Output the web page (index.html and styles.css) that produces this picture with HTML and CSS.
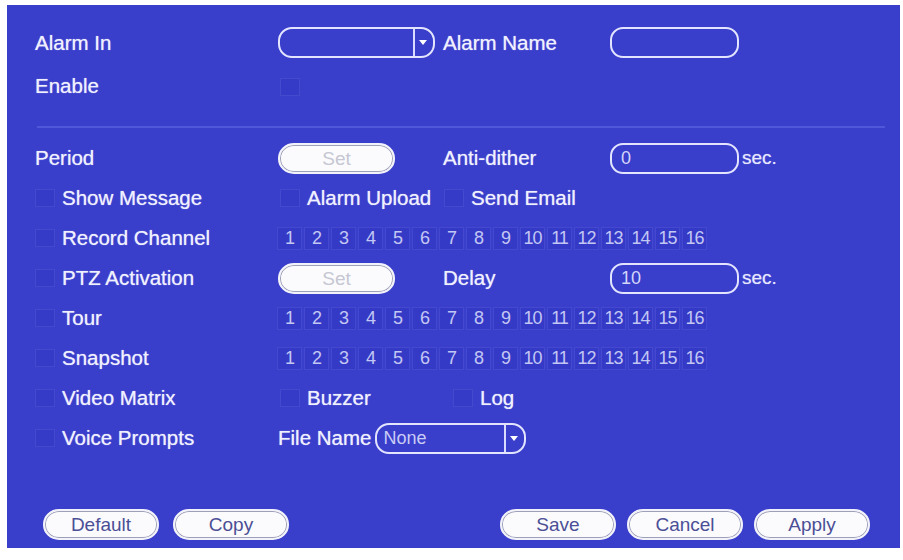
FILE: index.html
```html
<!DOCTYPE html>
<html>
<head>
<meta charset="utf-8">
<link rel="stylesheet" href="styles.css">
</head>
<body>
<div class="panel">
  <div class="form top">
    <div class="label">Alarm In</div>
    <div class="select wide"><span class="sel-val"></span><span class="sel-btn"><span class="tri"></span></span></div>
    <div class="label">Alarm Name</div>
    <div class="input"></div>

    <div class="label">Enable</div>
    <div class="cell"><span class="check c-enable"></span></div>
  </div>

  <div class="sep"></div>

  <div class="form rows">
    <div class="label">Period</div>
    <div class="cell"><span class="setbtn">Set</span></div>
    <div class="label">Anti-dither</div>
    <div class="cell"><span class="input">0</span><span class="unit">sec.</span></div>

    <div class="cell"><span class="check"></span><span class="label lbl-c">Show Message</span></div>
    <div class="cell"><span class="check c2"></span><span class="label lbl-c">Alarm Upload</span></div>
    <div class="cell span2"><span class="check c3"></span><span class="label lbl-c">Send Email</span></div>

    <div class="cell"><span class="check"></span><span class="label lbl-c">Record Channel</span></div>
    <div class="cell span3">
      <div class="chans">
        <span>1</span><span>2</span><span>3</span><span>4</span><span>5</span><span>6</span><span>7</span><span>8</span><span>9</span><span>10</span><span>11</span><span>12</span><span>13</span><span>14</span><span>15</span><span>16</span>
      </div>
    </div>

    <div class="cell"><span class="check"></span><span class="label lbl-c">PTZ Activation</span></div>
    <div class="cell"><span class="setbtn">Set</span></div>
    <div class="label">Delay</div>
    <div class="cell"><span class="input">10</span><span class="unit">sec.</span></div>

    <div class="cell"><span class="check"></span><span class="label lbl-c">Tour</span></div>
    <div class="cell span3">
      <div class="chans">
        <span>1</span><span>2</span><span>3</span><span>4</span><span>5</span><span>6</span><span>7</span><span>8</span><span>9</span><span>10</span><span>11</span><span>12</span><span>13</span><span>14</span><span>15</span><span>16</span>
      </div>
    </div>

    <div class="cell"><span class="check"></span><span class="label lbl-c">Snapshot</span></div>
    <div class="cell span3">
      <div class="chans">
        <span>1</span><span>2</span><span>3</span><span>4</span><span>5</span><span>6</span><span>7</span><span>8</span><span>9</span><span>10</span><span>11</span><span>12</span><span>13</span><span>14</span><span>15</span><span>16</span>
      </div>
    </div>

    <div class="cell"><span class="check"></span><span class="label lbl-c">Video Matrix</span></div>
    <div class="cell"><span class="check c2"></span><span class="label lbl-c">Buzzer</span></div>
    <div class="cell span2"><span class="check c-log"></span><span class="label lbl-c">Log</span></div>

    <div class="cell"><span class="check"></span><span class="label lbl-c">Voice Prompts</span></div>
    <div class="cell span3"><span class="label">File Name</span><div class="select file"><span class="sel-val">None</span><span class="sel-btn"><span class="tri"></span></span></div></div>
  </div>

  <div class="footer">
    <div class="btns">
      <span class="btn">Default</span>
      <span class="btn">Copy</span>
    </div>
    <div class="btns right">
      <span class="btn">Save</span>
      <span class="btn">Cancel</span>
      <span class="btn">Apply</span>
    </div>
  </div>
</div>
</body>
</html>
```

FILE: styles.css
```css
html, body {
  margin: 0;
  padding: 0;
  background: #ffffff;
}

body {
  font-family: "Liberation Sans", Arial, sans-serif;
}

.panel {
  box-sizing: border-box;
  margin: 5px 0 0 7px;
  width: 893px;
  height: 543px;
  background: #393ecb;
  padding: 16px 30px 0 28px;
  display: flex;
  flex-direction: column;
}

.form {
  display: grid;
  grid-template-columns: 243px 165px 167px 1fr;
  align-items: center;
}

.form.top {
  grid-auto-rows: 43px;
}

.form.rows {
  grid-auto-rows: 40px;
}

.cell {
  display: flex;
  align-items: center;
  height: 100%;
}

.span2 { grid-column: span 2; }
.span3 { grid-column: span 3; }

.label {
  color: #f0f1ff;
  font-size: 20.5px;
  white-space: nowrap;
  text-shadow: 0 0 1px rgba(255,255,255,0.7);
}

.lbl-c {
  margin-left: 7px;
}

.sep {
  height: 2px;
  background: #5057d8;
  margin: 19px 0 10px 2px;
  width: 848px;
}

.check {
  box-sizing: border-box;
  width: 20px;
  height: 18px;
  border: 1px solid rgba(170, 178, 255, 0.13);
  background: rgba(45, 50, 185, 0.25);
  flex: none;
}

.c2 { margin-left: 2px; }
.c3 { margin-left: 1px; }
.c-log { margin-left: 10px; }
.c-enable { margin-left: 2px; margin-top: 2px; }

.select {
  box-sizing: border-box;
  height: 31px;
  border: 2px solid #e3e5ff;
  border-radius: 14px;
  display: flex;
  align-items: stretch;
}

.select.wide {
  width: 157px;
}

.select.file {
  width: 151px;
  margin-left: 4px;
}

.sel-val {
  flex: 1;
  border-right: 2px solid #d9dbff;
  color: #c9ccf5;
  font-size: 18px;
  padding-left: 6px;
  line-height: 27px;
}

.sel-btn {
  width: 18px;
  display: flex;
  align-items: center;
  justify-content: center;
}

.tri {
  width: 0;
  height: 0;
  border-left: 4px solid transparent;
  border-right: 4px solid transparent;
  border-top: 5px solid #ffffff;
  margin-right: 3px;
}

.input {
  box-sizing: border-box;
  display: block;
  width: 129px;
  height: 31px;
  border: 2px solid #e3e5ff;
  border-radius: 13px;
  color: #d3d6fa;
  font-size: 18px;
  line-height: 27px;
  padding-left: 9px;
}

.unit {
  color: #e8e9ff;
  font-size: 19px;
  margin-left: 3px;
  text-shadow: 0 0 1px rgba(255,255,255,0.5);
}

.setbtn {
  box-sizing: border-box;
  display: block;
  width: 117px;
  height: 31px;
  background: #fbfbfd;
  border: 2px solid #f2f2fb;
  border-radius: 16px / 15px;
  box-shadow: inset 0 0 0 1px #9ea0b8;
  color: #c6c7d2;
  font-size: 19px;
  text-align: center;
  line-height: 27px;
}

.chans {
  display: flex;
  gap: 2px;
  margin-left: -1px;
}

.chans span {
  box-sizing: border-box;
  width: 25px;
  height: 23px;
  border: 1px solid rgba(150, 158, 255, 0.16);
  background: rgba(45, 50, 190, 0.3);
  color: #c3c7f3;
  font-size: 18px;
  letter-spacing: -1px;
  text-align: center;
  line-height: 21px;
}

.footer {
  display: flex;
  justify-content: space-between;
  margin-top: 51px;
  padding-left: 8px;
}

.btns {
  display: flex;
  gap: 14px;
}

.btns.right {
  gap: 11px;
}

.btn {
  box-sizing: border-box;
  display: block;
  width: 116px;
  height: 31px;
  background: #fbfbfd;
  border: 2px solid #f2f2fb;
  border-radius: 16px / 15px;
  box-shadow: inset 0 0 0 1px #9ea0b8;
  color: #4b4f96;
  font-size: 19px;
  text-align: center;
  line-height: 27px;
}
```
